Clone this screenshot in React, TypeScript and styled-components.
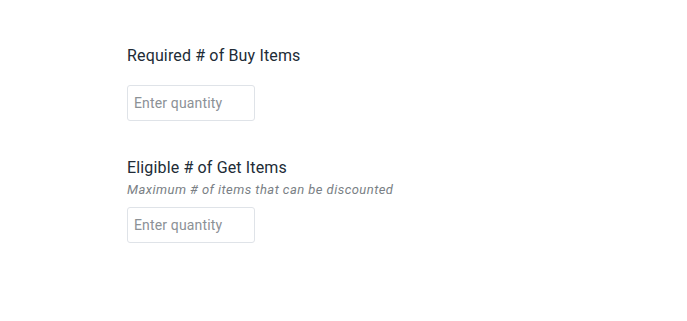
import React from "react";
import styled, { createGlobalStyle } from "styled-components";

const Global = createGlobalStyle`
  html, body { margin: 0; padding: 0; background: #fff; }
  body { font-family: Roboto, "Noto Sans", sans-serif; }
`;

const Page = styled.div`
  width: 687px;
  height: 321px;
  box-sizing: border-box;
  padding: 45px 0 0 127px;
  display: flex;
  flex-direction: column;
  gap: 36px;
`;

const Field = styled.div`
  display: flex;
  flex-direction: column;
`;

const Label = styled.label<{ $hasHint?: boolean }>`
  font-size: 16px;
  line-height: 21px;
  letter-spacing: 0.15px;
  color: #212b36;
  margin-bottom: ${(p) => (p.$hasHint ? "3px" : "19px")};
`;

const Hint = styled.div`
  font-size: 13px;
  line-height: 18px;
  font-style: italic;
  letter-spacing: 0.45px;
  color: #7a7f85;
  margin-bottom: 8px;
`;

const Input = styled.input`
  box-sizing: border-box;
  width: 128px;
  height: 36px;
  border: 1px solid #dfe3e8;
  border-radius: 3px;
  padding: 0 6px;
  font-family: Roboto, "Noto Sans", sans-serif;
  font-size: 14px;
  letter-spacing: 0.15px;
  color: #212b36;
  outline: none;
  &::placeholder { color: #8c9196; }
`;

export default function App() {
  return (
    <>
      <Global />
      <Page>
        <Field>
          <Label>Required # of Buy Items</Label>
          <Input placeholder="Enter quantity" />
        </Field>
        <Field>
          <Label $hasHint>Eligible # of Get Items</Label>
          <Hint>Maximum # of items that can be discounted</Hint>
          <Input placeholder="Enter quantity" />
        </Field>
      </Page>
    </>
  );
}
